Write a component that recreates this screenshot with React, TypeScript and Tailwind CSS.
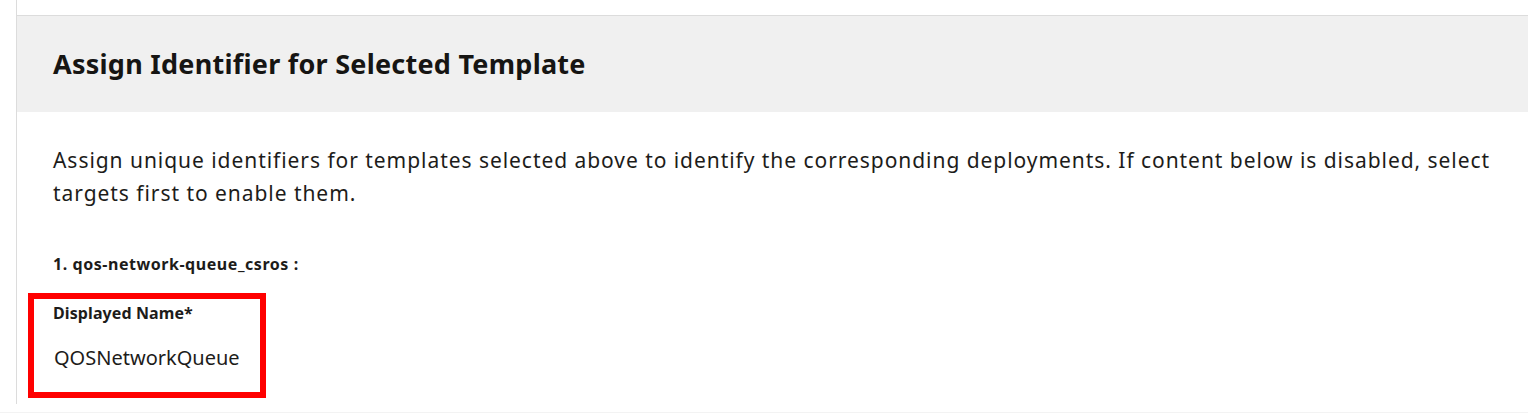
import React from "react";

interface TemplateIdentifierProps {
  index: number;
  name: string;
  value: string;
}

function TemplateIdentifier({ index, name, value }: TemplateIdentifierProps) {
  return (
    <div>
      <h3 className="mt-[44px] text-[16px] leading-5 font-bold tracking-[0.55px] text-[#1d1c1a]">
        {index}. {name} :
      </h3>
      {/* highlighted field */}
      <div className="mt-[19px] -ml-[25px] h-[105px] w-[238px] border-[6px] border-[#ff0000] pt-[4px] pl-[19px]">
        <label className="block text-[16px] leading-5 font-bold tracking-[0.1px] text-[#1d1c1a]">
          Displayed Name*
        </label>
        <div className="mt-[23px] pl-[1px] text-[20px] leading-6 text-[#1d1c1a]">{value}</div>
      </div>
    </div>
  );
}

export default function App() {
  return (
    <div className="h-[413px] w-[1528px] overflow-hidden bg-white font-['Noto_Sans',sans-serif]">
      <div className="ml-[16px] h-[404px] border-l border-[#dcdcdc] pt-[15px]">
        <div className="flex h-[97px] items-center border-t border-[#dcdcdc] bg-[#f0f0f0] pl-[36px]">
          <h2 className="text-[27px] font-bold tracking-[0.25px] text-[#161513]">
            Assign Identifier for Selected Template
          </h2>
        </div>
        <div className="pt-[32px] pr-[20px] pl-[36px]">
          <p className="text-[21px] leading-[33px] tracking-[0.95px] text-[#1d1c1a]">
            Assign unique identifiers for templates selected above to identify the corresponding deployments. If
            content below is disabled, select targets first to enable them.
          </p>
          <TemplateIdentifier index={1} name="qos-network-queue_csros" value="QOSNetworkQueue" />
        </div>
      </div>
      <div className="mt-[8px] border-b border-[#f3f3f3]" />
    </div>
  );
}
